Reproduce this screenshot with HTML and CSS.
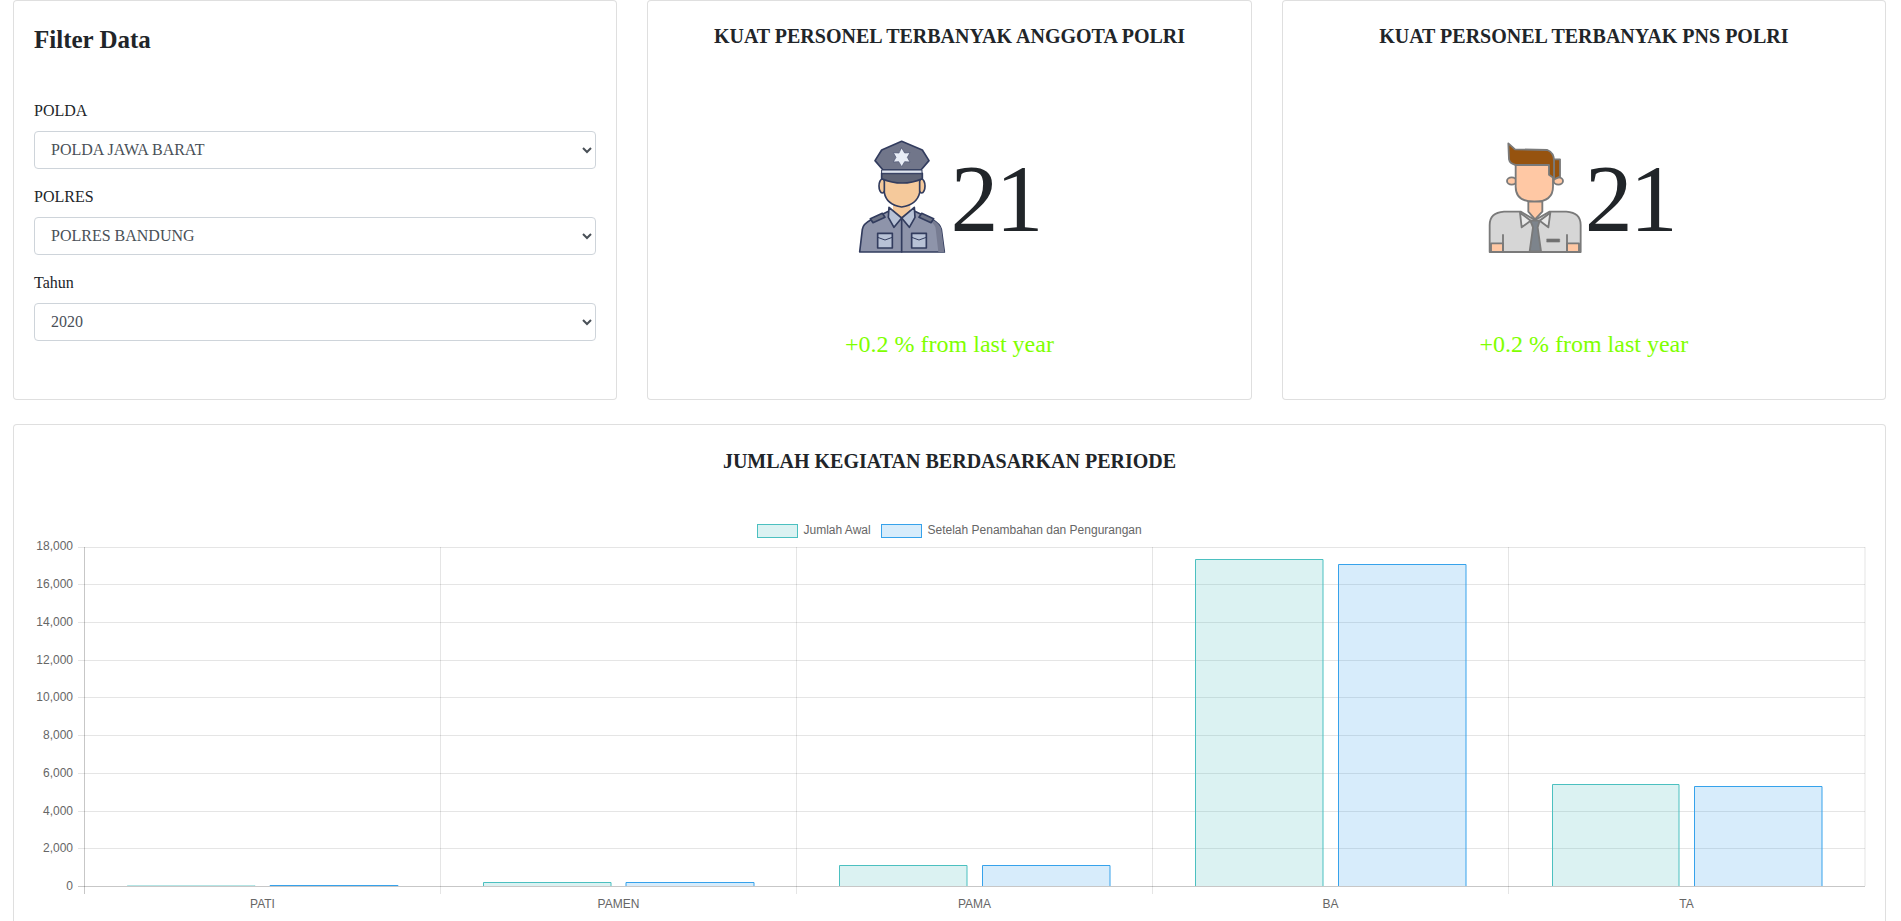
FILE: index.html
```html
<!DOCTYPE html>
<html lang="en">
<head>
    <meta charset="UTF-8">
    <meta name="viewport" content="width=device-width, initial-scale=1.0">
    <title>Dashboard Personel</title>
    <link rel="stylesheet" href="styles.css">
</head>
<body>
    <div class="top-row">
        <div class="card filter-card">
            <h4 class="filter-title">Filter Data</h4>
            <div class="form-group">
                <label for="polda">POLDA</label>
                <select id="polda" class="form-control"><option>POLDA JAWA BARAT</option></select>
            </div>
            <div class="form-group">
                <label for="polres">POLRES</label>
                <select id="polres" class="form-control"><option>POLRES BANDUNG</option></select>
            </div>
            <div class="form-group">
                <label for="tahun">Tahun</label>
                <select id="tahun" class="form-control"><option>2020</option></select>
            </div>
        </div>

        <div class="card stat-card">
            <h5 class="card-title">KUAT PERSONEL TERBANYAK ANGGOTA POLRI</h5>
            <div class="stat-body">
                <svg class="stat-icon" viewBox="42 30 288 342" width="96" height="114" stroke-linejoin="round" stroke-linecap="round">
                    <g stroke="#323c5e" stroke-width="5">
                        <ellipse cx="130" cy="168" rx="10" ry="21" fill="#f5c99b"/>
                        <ellipse cx="248" cy="168" rx="10" ry="21" fill="#f5c99b"/>
                        <path d="M62 366 L70 298 Q72 282 95 270 L150 243 H226 L282 270 Q303 282 307 298 L316 366 Z" fill="#8e94aa"/>
                        <path d="M282 270 Q303 282 307 298 L316 366 H298 L290 296 Q288 282 272 272 Z" fill="#777c92" stroke="none"/>
                        <path d="M162 222 H214 V240 L188 266 L162 240 Z" fill="#f5c99b" stroke="none"/>
                        <path d="M136 140 V188 Q142 224 188 231 Q234 224 242 188 V140 Z" fill="#f5c99b"/>
                        <path d="M150 232 L188 264 L165 292 L148 262 Z M226 232 L188 264 L211 292 L228 262 Z" fill="#b8c2d6"/>
                        <path d="M94 266 L130 250 L138 262 L102 278 Z M284 266 L248 250 L240 262 L276 278 Z" fill="#6d7386"/>
                        <path d="M188 266 V366" fill="none"/>
                        <rect x="116" y="310" width="44" height="44" fill="#b8c2d6"/>
                        <rect x="218" y="310" width="44" height="44" fill="#b8c2d6"/>
                        <path d="M116 322 L138 330 L160 322 M218 322 L240 330 L262 322" fill="none" stroke-width="3"/>
                        <path d="M128 130 H250 V146 Q190 172 128 146 Z" fill="#5f6476"/>
                        <path d="M108 92 L128 60 L188 34 L250 60 L270 92 L246 120 H132 Z" fill="#71768a"/>
                        <rect x="129" y="120" width="120" height="10" fill="#dfe5ef" stroke-width="3"/>
                    </g>
                    <polygon points="188,54 197,69 213,68 205,82 213,96 197,95 188,110 179,95 163,96 171,82 163,68 179,69" fill="#e8edf6" stroke="#4a5270" stroke-width="2"/>
                </svg>
                <span class="stat-number">21</span>
            </div>
            <p class="stat-change">+0.2 % from last year</p>
        </div>

        <div class="card stat-card">
            <h5 class="card-title">KUAT PERSONEL TERBANYAK PNS POLRI</h5>
            <div class="stat-body">
                <svg class="stat-icon" viewBox="27 30 288 342" width="96" height="114" stroke-linejoin="round" stroke-linecap="round">
                    <g stroke="#7a7a7a" stroke-width="5.5">
                        <ellipse cx="98" cy="153" rx="14" ry="11" fill="#ffc8a4"/>
                        <ellipse cx="238" cy="153" rx="14" ry="11" fill="#ffc8a4"/>
                        <path d="M225 88 L243 88 V140 L225 148 Z" fill="#96530f"/>
                        <path d="M110 100 H222 V170 Q222 215 166 215 Q110 215 110 170 Z" fill="#ffc8a4"/>
                        <path d="M88 40 L108 58 L205 60 Q225 68 225 92 V145 L210 134 V105 H110 Q92 100 90 88 Z" fill="#96530f"/>
                        <path d="M148 215 H190 V245 L168 268 L148 245 Z" fill="#ffc8a4"/>
                        <path d="M32 366 V285 Q32 248 75 245 H125 L168 270 L212 245 H262 Q305 248 305 285 V366 Z" fill="#d6d6d6"/>
                        <rect x="36" y="340" width="36" height="26" fill="#ffc8a4"/>
                        <rect x="264" y="340" width="36" height="26" fill="#ffc8a4"/>
                        <path d="M72 315 V366 M264 315 V366" fill="none"/>
                        <path d="M123 248 L155 272 L128 292 Z M214 248 L182 272 L208 292 Z" fill="#e9e9e9"/>
                        <path d="M154 272 H182 L176 292 L186 364 H152 L162 292 Z" fill="#7d848c"/>
                        <rect x="204" y="327" width="38" height="9" fill="#6f6f6f" stroke-width="2"/>
                    </g>
                </svg>
                <span class="stat-number">21</span>
            </div>
            <p class="stat-change">+0.2 % from last year</p>
        </div>
    </div>

    <div class="card chart-card">
        <h5 class="card-title">JUMLAH KEGIATAN BERDASARKAN PERIODE</h5>
        <!-- viewBox uses page coordinates so the values below read like the chart's own pixels -->
        <svg class="chart" viewBox="14 510 1870 411" width="1870" height="411">
            <g class="legend">
                <rect class="teal" x="757.5" y="524.5" width="40" height="13"/>
                <text x="803.5" y="534">Jumlah Awal</text>
                <rect class="blue" x="881.5" y="524.5" width="40" height="13"/>
                <text x="927.5" y="534">Setelah Penambahan dan Pengurangan</text>
            </g>

            <path class="grid" d="M78 547.5H1865M78 584.5H1865M78 622.5H1865M78 660.5H1865M78 697.5H1865M78 735.5H1865M78 773.5H1865M78 811.5H1865M78 848.5H1865"/>
            <path class="grid" d="M440.5 547V894M796.5 547V894M1152.5 547V894M1508.5 547V894M1865 547V886"/>
            <path class="axis" d="M84.5 547V894M78 886.5H1865"/>

            <g class="ticks">
                <text x="73" y="550">18,000</text>
                <text x="73" y="588">16,000</text>
                <text x="73" y="626">14,000</text>
                <text x="73" y="664">12,000</text>
                <text x="73" y="701">10,000</text>
                <text x="73" y="739">8,000</text>
                <text x="73" y="777">6,000</text>
                <text x="73" y="815">4,000</text>
                <text x="73" y="852">2,000</text>
                <text x="73" y="890">0</text>
            </g>

            <g class="cats">
                <text x="262.5" y="908">PATI</text>
                <text x="618.5" y="908">PAMEN</text>
                <text x="974.5" y="908">PAMA</text>
                <text x="1330.5" y="908">BA</text>
                <text x="1686.5" y="908">TA</text>
            </g>

            <path class="teal faint" d="M127.5 886V885.5H255V886"/>
            <path class="blue" d="M270 886V885.5H398V886"/>
            <path class="teal" d="M483.5 886V882.5H611V886"/>
            <path class="blue" d="M626 886V882.5H754V886"/>
            <path class="teal" d="M839.5 886V865.5H967V886"/>
            <path class="blue" d="M982.5 886V865.5H1110V886"/>
            <path class="teal" d="M1195.5 886V559.5H1323V886"/>
            <path class="blue" d="M1338.5 886V564.5H1466V886"/>
            <path class="teal" d="M1552.5 886V784.5H1679V886"/>
            <path class="blue" d="M1694.5 886V786.5H1822V886"/>
        </svg>
    </div>
</body>
</html>
```

FILE: styles.css
```css
html, body {
    height: 921px;
    overflow: hidden;
}
body {
    margin: 0;
    padding: 0 15px 0 13px;
    font-family: "Liberation Serif", serif;
    font-size: 16px;
    color: #212529;
    background-color: #fff;
}
.card {
    box-sizing: border-box;
    background-color: #fff;
    border: 1px solid rgba(0, 0, 0, 0.125);
    border-radius: 4px;
}
.top-row {
    display: grid;
    grid-template-columns: repeat(3, 1fr);
    gap: 30px;
    margin-bottom: 24px;
}
.filter-card {
    height: 400px;
    padding: 24px 20px;
}
.filter-title {
    margin: 0 0 45px;
    font-size: 25px;
    line-height: 29px;
    font-weight: bold;
}
.form-group {
    margin-bottom: 16px;
}
.form-group label {
    display: block;
    margin-bottom: 8px;
    line-height: 24px;
}
.form-control {
    display: block;
    box-sizing: border-box;
    width: 100%;
    height: 38px;
    padding: 5px 12px 7px;
    font-family: inherit;
    font-size: 16px;
    color: #495057;
    background-color: #fff;
    border: 1px solid #ced4da;
    border-radius: 4px;
}
.card-title {
    margin: 0;
    font-size: 20px;
    line-height: 24px;
    font-weight: bold;
    text-align: center;
}
.stat-card {
    display: flex;
    flex-direction: column;
    align-items: center;
    height: 400px;
    padding-top: 23px;
}
.stat-body {
    display: flex;
    align-items: flex-end;
    margin-top: 92px;
}
.stat-number {
    margin: 0 5px 0 1px;
    font-size: 96px;
    line-height: 111px;
    letter-spacing: -3px;
}
.stat-change {
    margin: 76px 0 0;
    font-size: 24px;
    line-height: 29px;
    color: #7fff00;
}
.chart-card {
    height: 600px;
    padding-top: 24px;
}
.chart {
    display: block;
    margin-top: 37px;
}
.chart text {
    font-family: "Liberation Sans", sans-serif;
    font-size: 12px;
    fill: #666;
}
.ticks text {
    text-anchor: end;
}
.cats text {
    text-anchor: middle;
}
.grid {
    fill: none;
    stroke: rgba(0, 0, 0, 0.1);
    stroke-width: 1;
}
.axis {
    fill: none;
    stroke: rgba(0, 0, 0, 0.22);
    stroke-width: 1;
}
.teal {
    fill: rgba(75, 192, 192, 0.2);
    stroke: rgb(75, 192, 192);
    stroke-width: 1;
}
.teal.faint {
    stroke: rgba(75, 192, 192, 0.35);
}
.blue {
    fill: rgba(54, 162, 235, 0.2);
    stroke: rgb(54, 162, 235);
    stroke-width: 1;
}
```
